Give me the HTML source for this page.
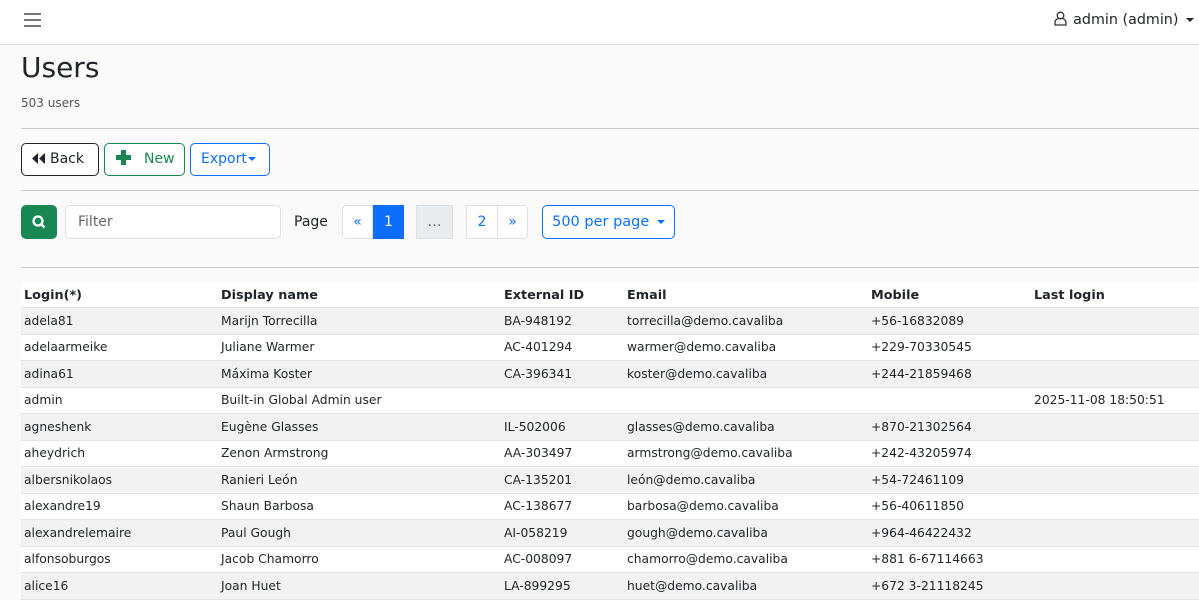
<!DOCTYPE html>
<html><head><meta charset="utf-8"><style>
body{margin:0;background:#fafafa;font-family:"DejaVu Sans","Liberation Sans",sans-serif;color:#212529;width:1199px;height:600px;overflow:hidden}
.top{height:44px;background:#fff;border-bottom:1px solid #dee2e6;position:relative}
.ham{position:absolute;left:24px;top:13px;width:17px}
.ham div{height:2px;background:#777;margin-bottom:4px}
.user{position:absolute;right:5px;top:11px;font-size:14.3px}
.car{display:inline-block;width:0;height:0;border-left:4px solid transparent;border-right:4px solid transparent;border-top:4.5px solid currentColor;vertical-align:2px;margin-left:3px}
h1{font-weight:400;font-size:28px;margin:0;position:absolute;left:21px;top:51px}
.sub{position:absolute;left:21px;top:96px;font-size:12px;color:#555}
hr{position:absolute;left:21px;width:1178px;border:0;border-top:1px solid #c8c8c8;margin:0}
.btn{position:absolute;height:33px;box-sizing:border-box;border:1px solid;border-radius:5px;font-size:14px;line-height:31px;padding:0 10px;background:#fff;white-space:nowrap}
table{position:absolute;left:21px;top:283px;width:1178px;border-collapse:collapse;font-size:12.3px;table-layout:fixed}
th{text-align:left;font-weight:bold;padding:3px 3px;height:18px;background:#fff;border-bottom:1px solid #dee2e6;font-size:12.8px}
td{padding:0 3px;height:25.5px;border-bottom:1px solid #e4e4e4;white-space:nowrap}
tr:nth-child(odd) td{background:#f2f2f2}
tr:nth-child(even) td{background:#fff}
.pg{position:absolute;top:205px;height:34px;box-sizing:border-box;border:1px solid #dee2e6;text-align:center;line-height:32px;font-size:14px;color:#0d6efd;background:#fff}
</style></head><body>
<div class="top"><div class="ham"><div></div><div></div><div></div></div>
<div class="user"><svg width="13" height="15" viewBox="0 0 13 15" style="vertical-align:-2px;margin-right:6px"><circle cx="6.5" cy="4.5" r="3.3" fill="none" stroke="#333" stroke-width="1.3"/><path d="M1 14 v-2.5 a4 4 0 0 1 4-4 h3 a4 4 0 0 1 4 4 v2.5 z" fill="none" stroke="#333" stroke-width="1.3"/></svg>admin (admin) <span class="car"></span></div></div>
<h1>Users</h1><div class="sub">503 users</div>
<hr style="top:128px"><hr style="top:190px"><hr style="top:267px">
<div class="btn" style="left:21px;top:143px;width:78px;border-color:#212529;color:#212529"><svg width="13" height="11" style="vertical-align:-1px;margin-right:5px"><path d="M6 0v11L0 5.5zM13 0v11L7 5.5z" fill="#212529"/></svg>Back</div>
<div class="btn" style="left:104px;top:143px;width:81px;border-color:#198754;color:#198754"><svg width="15" height="15" style="vertical-align:-2px;margin-right:13px;margin-left:1px"><path d="M5 0h5v5h5v5h-5v5h-5v-5h-5v-5h5z" fill="#198754"/></svg>New</div>
<div class="btn" style="left:190px;top:143px;width:80px;border-color:#0d6efd;color:#0d6efd">Export<span class="car" style="margin-left:1px"></span></div>
<div style="position:absolute;left:21px;top:205px;width:36px;height:34px;background:#198754;border-radius:5px"><svg width="36" height="34"><circle cx="17" cy="16" r="4.5" fill="none" stroke="#fff" stroke-width="2.3"/><path d="M20 19l3.5 3.5" stroke="#fff" stroke-width="2.5"/></svg></div>
<div style="position:absolute;left:65px;top:205px;width:216px;height:34px;box-sizing:border-box;border:1px solid #dee2e6;border-radius:5px;background:#fff;font-size:14px;color:#666;line-height:32px;padding-left:12px">Filter</div>
<div style="position:absolute;left:294px;top:214px;font-size:14px">Page</div>
<div class="pg" style="left:342px;width:31px;border-radius:5px 0 0 5px">«</div>
<div class="pg" style="left:373px;width:31px;background:#0d6efd;color:#fff;border-color:#0d6efd">1</div>
<div class="pg" style="left:416px;width:37px;background:#e9ecef;color:#666">…</div>
<div class="pg" style="left:466px;width:32px">2</div>
<div class="pg" style="left:497px;width:31px;border-radius:0 5px 5px 0">»</div>
<div class="pg" style="left:542px;width:133px;border-color:#0d6efd;border-radius:5px;font-size:14.5px">500 per page <span class="car" style="margin-left:3px"></span></div>
<table>
<thead><tr><th style="width:191px">Login(*)</th><th style="width:277px">Display name</th><th style="width:117px">External ID</th><th style="width:238px">Email</th><th style="width:157px">Mobile</th><th>Last login</th></tr></thead>
<tbody>
<tr><td>adela81</td><td>Marijn Torrecilla</td><td>BA-948192</td><td>torrecilla@demo.cavaliba</td><td>+56-16832089</td><td></td></tr>
<tr><td>adelaarmeike</td><td>Juliane Warmer</td><td>AC-401294</td><td>warmer@demo.cavaliba</td><td>+229-70330545</td><td></td></tr>
<tr><td>adina61</td><td>Máxima Koster</td><td>CA-396341</td><td>koster@demo.cavaliba</td><td>+244-21859468</td><td></td></tr>
<tr><td>admin</td><td>Built-in Global Admin user</td><td></td><td></td><td></td><td>2025-11-08 18:50:51</td></tr>
<tr><td>agneshenk</td><td>Eugène Glasses</td><td>IL-502006</td><td>glasses@demo.cavaliba</td><td>+870-21302564</td><td></td></tr>
<tr><td>aheydrich</td><td>Zenon Armstrong</td><td>AA-303497</td><td>armstrong@demo.cavaliba</td><td>+242-43205974</td><td></td></tr>
<tr><td>albersnikolaos</td><td>Ranieri León</td><td>CA-135201</td><td>león@demo.cavaliba</td><td>+54-72461109</td><td></td></tr>
<tr><td>alexandre19</td><td>Shaun Barbosa</td><td>AC-138677</td><td>barbosa@demo.cavaliba</td><td>+56-40611850</td><td></td></tr>
<tr><td>alexandrelemaire</td><td>Paul Gough</td><td>AI-058219</td><td>gough@demo.cavaliba</td><td>+964-46422432</td><td></td></tr>
<tr><td>alfonsoburgos</td><td>Jacob Chamorro</td><td>AC-008097</td><td>chamorro@demo.cavaliba</td><td>+881 6-67114663</td><td></td></tr>
<tr><td>alice16</td><td>Joan Huet</td><td>LA-899295</td><td>huet@demo.cavaliba</td><td>+672 3-21118245</td><td></td></tr>
</tbody></table>
</body></html>
